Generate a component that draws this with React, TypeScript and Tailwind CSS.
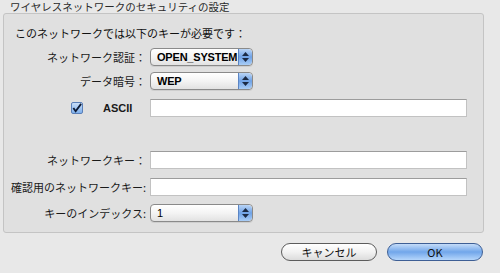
const font = { fontFamily: '"Noto Sans CJK JP", "Liberation Sans", sans-serif' };

function Stepper() {
  return (
    <div className="flex h-full w-[14px] flex-col items-center justify-center gap-[2px] rounded-r-[4px] border-l border-[#5b85c4] bg-gradient-to-b from-[#b9d4f5] via-[#6fa2e6] to-[#a9cdf6]">
      <svg width="7" height="4" viewBox="0 0 7 4">
        <path d="M0 4 L3.5 0 L7 4 Z" fill="#1b2a44" />
      </svg>
      <svg width="7" height="4" viewBox="0 0 7 4">
        <path d="M0 0 L3.5 4 L7 0 Z" fill="#1b2a44" />
      </svg>
    </div>
  );
}

function Popup({ value, bold = true }: { value: string; bold?: boolean }) {
  return (
    <div className="flex h-[18px] w-[103px] items-center overflow-hidden rounded-[4px] border border-[#8a8a8a] bg-gradient-to-b from-white via-[#f4f4f4] to-[#e2e2e2] shadow-[0_1px_0_rgba(0,0,0,0.08)]">
      <span
        className={`flex-1 whitespace-nowrap pl-[6px] text-[11px] leading-none text-black ${bold ? "font-bold tracking-[-0.2px]" : ""}`}
        style={{ fontFamily: '"Liberation Sans", sans-serif' }}
      >
        {value}
      </span>
      <Stepper />
    </div>
  );
}

function Field() {
  return (
    <div className="h-[18px] w-[317px] border border-[#c2c2c2] border-t-[#9c9c9c] bg-white" />
  );
}

function Row({ label, children, className = "" }: { label: string; children: React.ReactNode; className?: string }) {
  return (
    <div className={`flex h-[18px] items-center ${className}`}>
      <div className="w-[142px] whitespace-nowrap text-right text-[11px] leading-none text-[#1a1a1a]">
        {label}
      </div>
      <div className="ml-[4px]">{children}</div>
    </div>
  );
}

export default function App() {
  return (
    <div className="relative h-[273px] w-[500px] overflow-hidden bg-[#e8e8e8]" style={font}>
      <div className="pl-[10px] pt-[1px] text-[10.5px] leading-[12px] text-[#2a2a2a]">
        ワイヤレスネットワークのセキュリティの設定
      </div>
      <div className="ml-[3px] h-[220px] w-[481px] rounded-[3px] border border-[#c4c4c4] bg-[#e0e0e0]">
        <div className="pl-[11px] pt-[11px] text-[11px] leading-[16px] text-[#111]">
          このネットワークでは以下のキーが必要です：
        </div>
        <Row label="ネットワーク認証：" className="mt-[7px]">
          <Popup value="OPEN_SYSTEM" />
        </Row>
        <Row label="データ暗号：" className="mt-[6px]">
          <Popup value="WEP" />
        </Row>
        <div className="mt-[9px] flex h-[18px] items-center">
          <div className="ml-[67px] flex h-[12px] w-[12px] items-center justify-center rounded-[2px] border border-[#5a7fb8] bg-gradient-to-b from-[#c8ddf7] to-[#7fb0ec]">
            <svg width="11" height="10" viewBox="0 0 11 10">
              <path d="M1.5 5 L4 8.5 L10 0.5" stroke="#0d1a33" strokeWidth="2" fill="none" />
            </svg>
          </div>
          <span
            className="ml-[20px] w-[47px] text-[11px] font-bold leading-none text-[#1a1a1a]"
            style={{ fontFamily: '"Liberation Sans", sans-serif' }}
          >
            ASCII
          </span>
          <Field />
        </div>
        <Row label="ネットワークキー：" className="mt-[34px]">
          <Field />
        </Row>
        <Row label="確認用のネットワークキー:" className="mt-[9px]">
          <Field />
        </Row>
        <Row label="キーのインデックス:" className="mt-[8px]">
          <Popup value="1" bold={false} />
        </Row>
      </div>
      <div className="mt-[10px] flex justify-end gap-[10px] pr-[17px]">
        <button className="flex h-[18px] w-[96px] items-center justify-center rounded-full border border-[#5c5c5c] bg-gradient-to-b from-white via-[#f2f2f2] to-[#dcdcdc] text-[11px] leading-none text-[#111]">
          キャンセル
        </button>
        <button className="flex h-[18px] w-[96px] items-center justify-center rounded-full border border-[#3e5f95] bg-gradient-to-b from-[#c5dcf8] via-[#71a6ea] to-[#b5d6fb] text-[11px] leading-none text-[#111]">
          OK
        </button>
      </div>
    </div>
  );
}
